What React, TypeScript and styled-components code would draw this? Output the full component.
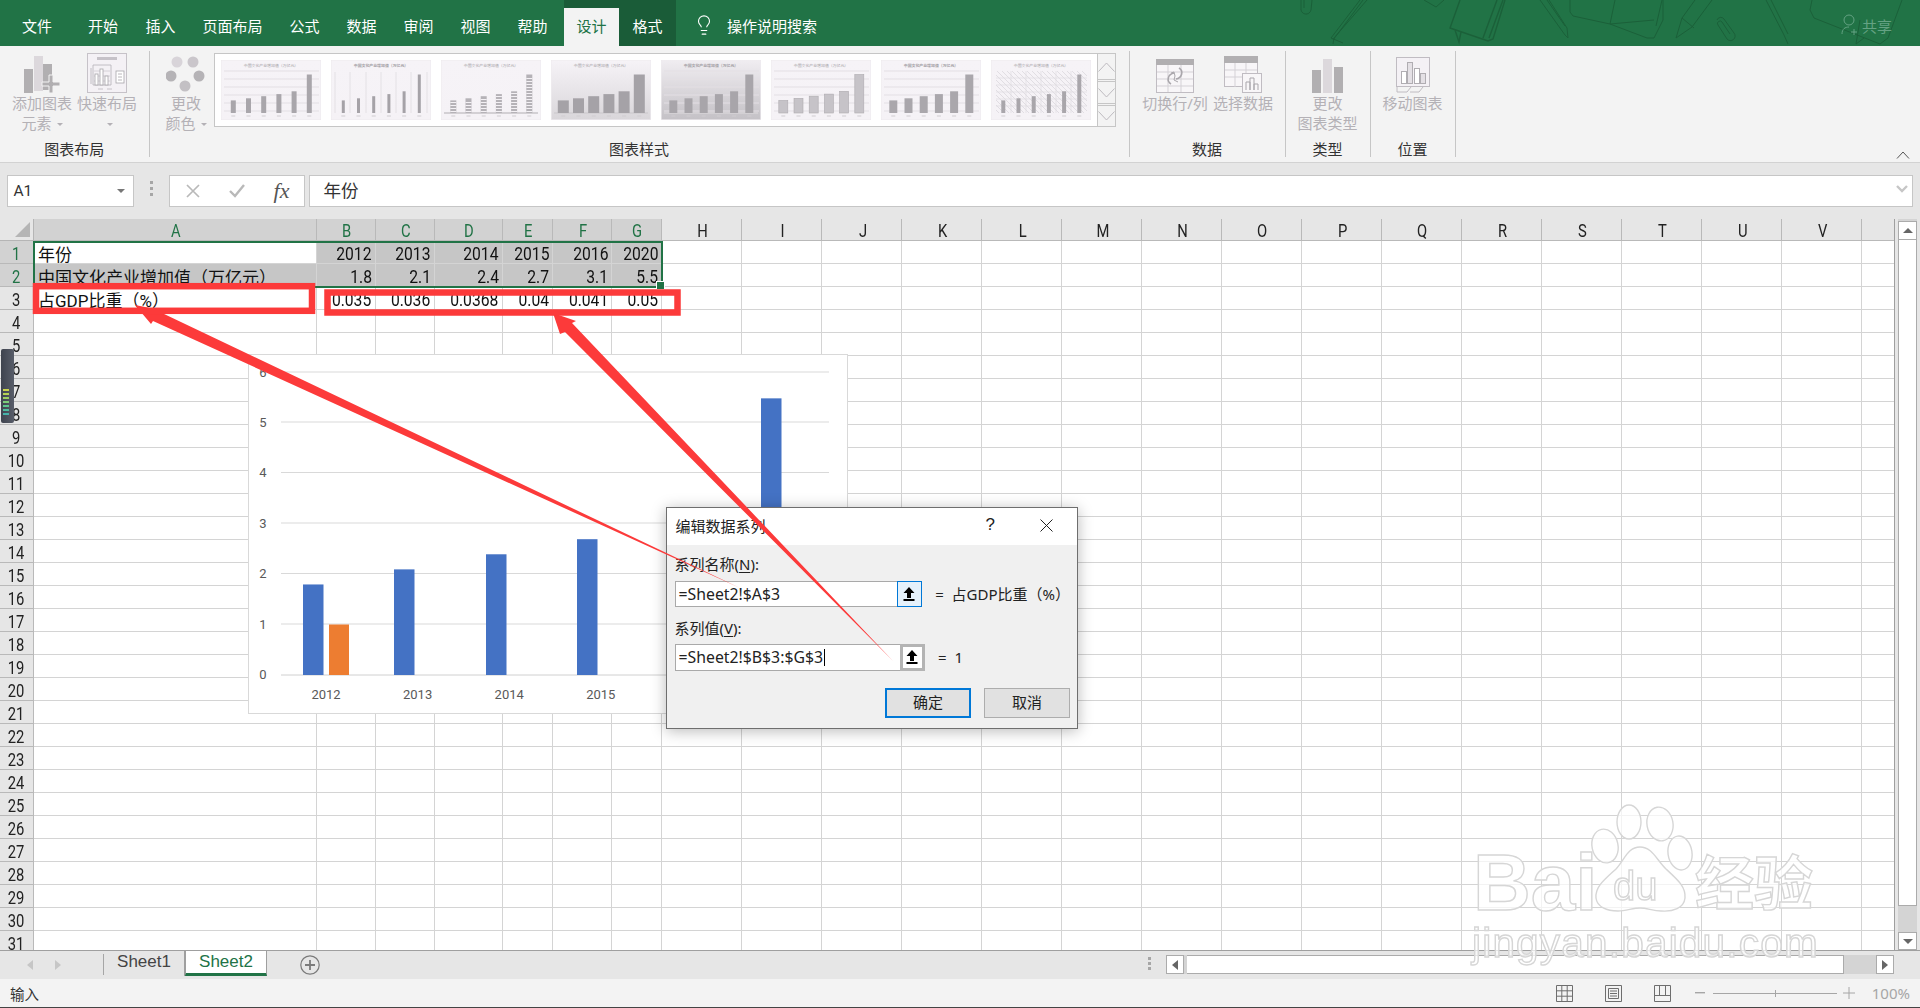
import styled, { createGlobalStyle } from 'styled-components';
import { Lightbulb } from 'lucide-react';

const UI_FONT = '"Noto Sans", "Noto Sans CJK SC", sans-serif';
const GREEN = '#217346';
const DISABLED = '#b4b1b6';

const GlobalStyle = createGlobalStyle`
  html, body {
    margin: 0;
    padding: 0;
    background: #e6e6e6;
  }
  * {
    box-sizing: border-box;
  }
`;

const COLUMNS = ['A', 'B', 'C', 'D', 'E', 'F', 'G', 'H', 'I', 'J', 'K', 'L', 'M', 'N', 'O', 'P', 'Q', 'R', 'S', 'T', 'U', 'V', ''];
const ROWS: string[][] = [
  ['年份', '2012', '2013', '2014', '2015', '2016', '2020'],
  ['中国文化产业增加值（万亿元）', '1.8', '2.1', '2.4', '2.7', '3.1', '5.5'],
  ['占GDP比重（%）', '0.035', '0.036', '0.0368', '0.04', '0.041', '0.05'],
];
const VALUES = [1.8, 2.1, 2.4, 2.7, 3.1, 5.5];

const Page = styled.div`
  position: relative;
  display: flex;
  flex-direction: column;
  width: 1920px;
  height: 1008px;
  overflow: hidden;
  font-family: ${UI_FONT};
  color: #333;
`;

/* title bar */
const TitleBar = styled.div`
  position: relative;
  display: flex;
  flex: none;
  height: 46px;
  background: ${GREEN};
  color: #fff;
  font-size: 15px;
`;

const Pattern = styled.svg`
  position: absolute;
  inset: 0;
  pointer-events: none;
`;

const Tab = styled.div<{ $width: number; $active?: boolean }>`
  position: relative;
  display: flex;
  align-items: center;
  justify-content: center;
  width: ${(p) => p.$width}px;
  height: ${(p) => (p.$active ? '38px' : '100%')};
  padding: ${(p) => (p.$active ? '0 0 3px' : '4px 0 0')};
  background: ${(p) => (p.$active ? '#f3f3f3' : 'transparent')};
  color: ${(p) => (p.$active ? GREEN : '#fff')};
`;

const ContextTabs = styled.div`
  display: flex;
  align-items: flex-end;
  height: 100%;
  margin-left: 3px;
  background: #1a5c38;
`;

const Search = styled.div`
  position: relative;
  display: flex;
  align-items: center;
  gap: 12px;
  margin-left: 17px;
  padding-top: 4px;
`;

const Share = styled.div`
  position: relative;
  display: flex;
  align-items: center;
  gap: 5px;
  margin-left: auto;
  padding: 4px 28px 0 0;
  color: #64a283;
`;

/* ribbon */
const Ribbon = styled.div`
  display: flex;
  flex: none;
  height: 117px;
  padding-top: 5px;
  background: #f3f3f3;
  border-bottom: 1px solid #d2d2d2;
`;

const Group = styled.div<{ $width: number }>`
  display: flex;
  flex-direction: column;
  width: ${(p) => p.$width}px;
  height: 106px;
  border-right: 1px solid #c6c6c6;
`;

const GroupBody = styled.div<{ $pad?: number }>`
  display: flex;
  flex: 1;
  justify-content: ${(p) => (p.$pad === undefined ? 'center' : 'flex-start')};
  padding-left: ${(p) => p.$pad ?? 0}px;
`;

const GroupTitle = styled.div`
  height: 18px;
  margin-bottom: -1px;
  font-size: 15px;
  line-height: 18px;
  text-align: center;
  color: #333;
`;

const RibbonButton = styled.div<{ $width: number }>`
  display: flex;
  flex-direction: column;
  align-items: center;
  width: ${(p) => p.$width}px;
  color: ${DISABLED};
  font-size: 15px;
  line-height: 19.5px;
  white-space: nowrap;
`;

const IconSlot = styled.div`
  display: flex;
  align-items: flex-end;
  justify-content: center;
  height: 43px;
  padding-bottom: 1px;
`;

const Caret = styled.span`
  display: inline-block;
  width: 0;
  height: 0;
  margin-left: 5px;
  vertical-align: 3px;
  border-top: 3px solid ${DISABLED};
  border-left: 3px solid transparent;
  border-right: 3px solid transparent;
`;

const Gallery = styled.div`
  display: flex;
  width: 902px;
  height: 74px;
  margin-top: 2px;
  padding: 6px 0 0 6px;
  background: #fff;
  border: 1px solid #c6c6c6;
`;

const Thumbs = styled.div`
  display: flex;
  gap: 10px;
  height: 60px;
`;

const GalleryScroll = styled.div`
  display: flex;
  flex-direction: column;
  width: 21px;
  height: 74px;
  margin: -7px -1px 0 6px;
  border: 1px solid #c6c6c6;
  background: #f3f3f3;
`;

const GalleryStep = styled.div<{ $height: number; $more?: boolean }>`
  display: flex;
  align-items: center;
  justify-content: center;
  height: ${(p) => p.$height}px;
  border-top: ${(p) => (p.$more ? '3px double #c6c6c6' : 'none')};
  & + & {
    border-top: ${(p) => (p.$more ? '3px double #c6c6c6' : '1px solid #c6c6c6')};
  }
`;

const Collapse = styled.div`
  align-self: flex-end;
  margin: 0 10px 3px auto;
  line-height: 0;
`;

/* formula bar */
const FormulaBar = styled.div`
  display: flex;
  flex: none;
  align-items: flex-start;
  height: 56px;
  padding: 12px 7px 0 6.5px;
  background: #e6e6e6;
`;

const FormulaBox = styled.div`
  display: flex;
  align-items: center;
  height: 32px;
  background: #fff;
  border: 1px solid #c6c6c6;
`;

const NameBox = styled(FormulaBox)`
  justify-content: space-between;
  width: 127px;
  padding: 0 8px 0 6px;
  font-family: Roboto, sans-serif;
  font-size: 15.5px;
`;

const NameCaret = styled.span`
  width: 0;
  height: 0;
  border-top: 4px solid #777;
  border-left: 4px solid transparent;
  border-right: 4px solid transparent;
`;

const Dots = styled.div`
  display: flex;
  flex-direction: column;
  gap: 3px;
  margin: 6px 16px 0 16px;
`;

const Dot = styled.span`
  width: 3px;
  height: 3px;
  background: #a6a6a6;
`;

const ActionBox = styled(FormulaBox)`
  justify-content: space-between;
  width: 136px;
  padding: 0 14px 0 16px;
`;

const FormulaInput = styled(FormulaBox)`
  flex: 1;
  justify-content: space-between;
  margin-left: 4px;
  padding: 0 3px 3px 14px;
  font-size: 17.5px;
`;

const FxText = styled.span`
  font-family: "Liberation Serif", serif;
  font-style: italic;
  font-size: 22px;
  line-height: 22px;
  color: #555;
`;

/* sheet */
const SheetRow = styled.div`
  position: relative;
  display: flex;
  flex: none;
  height: 731px;
  background: #e6e6e6;
`;

const SheetGrid = styled.div`
  display: grid;
  grid-template-columns: 33.5px 283px 59px 59px 68px 50.5px 59px 50px repeat(15, 80px) 33px;
  grid-auto-rows: 23px;
  grid-template-rows: 22px;
  width: 1895px;
  height: 731px;
  overflow: hidden;
  background: #fff;
  border-right: 1px solid #9f9f9f;
`;

const Corner = styled.div`
  position: relative;
  background: #e6e6e6;
  border-right: 1px solid #b5b5b5;
  border-bottom: 1px solid #b5b5b5;
  &::after {
    content: '';
    position: absolute;
    right: 3px;
    bottom: 3px;
    border-left: 15px solid transparent;
    border-bottom: 15px solid #b5b5b5;
  }
`;

const Heading = styled.div<{ $selected: boolean; $row?: boolean }>`
  display: flex;
  align-items: center;
  justify-content: center;
  overflow: hidden;
  background: ${(p) => (p.$selected ? '#d2d2d2' : '#e6e6e6')};
  color: ${(p) => (p.$selected ? GREEN : '#222')};
  border-right: 1px solid #b9b9b9;
  border-bottom: 1px solid #b9b9b9;
  font-family: Roboto, sans-serif;
  font-size: 18px;
  padding: ${(p) => (p.$row ? '2px 0 0' : '2px 0 0 2px')};
`;

const Narrow = styled.span`
  display: inline-block;
  transform: scaleX(0.82);
`;

const Cell = styled.div<{ $shaded: boolean; $number: boolean }>`
  display: flex;
  align-items: center;
  justify-content: ${(p) => (p.$number ? 'flex-end' : 'flex-start')};
  padding: 3px 3px 0 4.5px;
  overflow: hidden;
  white-space: nowrap;
  background: ${(p) => (p.$shaded ? '#c6c6c6' : '#fff')};
  border-right: 1px solid #d4d4d4;
  border-bottom: 1px solid #d4d4d4;
  color: #111;
  font-family: Roboto, "Noto Sans CJK SC", sans-serif;
  font-size: ${(p) => (p.$number ? 18 : 17)}px;
`;

const CellNumber = styled.span`
  display: inline-block;
  transform: scaleX(0.87);
  transform-origin: right center;
`;

const SelectionFrame = styled.div`
  position: absolute;
  left: 33px;
  top: 22px;
  width: 629.5px;
  height: 47px;
  border: 2px solid ${GREEN};
  pointer-events: none;
  &::after {
    content: '';
    position: absolute;
    right: -4px;
    bottom: -4px;
    width: 7px;
    height: 7px;
    background: ${GREEN};
    border: 1px solid #fff;
  }
`;

const ChartCard = styled.div`
  position: absolute;
  left: 248px;
  top: 135px;
  width: 600px;
  height: 360px;
  background: #fff;
  border: 1px solid #d9d9d9;
  line-height: 0;
`;

const VScroll = styled.div`
  display: flex;
  flex-direction: column;
  width: 19px;
  height: 731px;
  margin-left: 3px;
  padding-top: 2px;
  background: #d4d4d4;
`;

const ScrollButton = styled.div<{ $w?: number; $h?: number }>`
  display: flex;
  flex: none;
  align-items: center;
  justify-content: center;
  width: ${(p) => (p.$w ? `${p.$w}px` : '100%')};
  height: ${(p) => (p.$h ? `${p.$h}px` : '100%')};
  background: #fff;
  border: 1px solid #ababab;
`;

const VThumb = styled.div`
  flex: none;
  height: 666px;
  background: #fff;
  border: 1px solid #ababab;
  border-width: 0 1px 1px;
`;

const Track = styled.div`
  flex: 1;
  background: #d4d4d4;
`;

const Tri = styled.span<{ $dir: 'up' | 'down' | 'left' | 'right'; $color?: string }>`
  width: 0;
  height: 0;
  border-style: solid;
  border-color: transparent;
  border-width: ${(p) => (p.$dir === 'up' || p.$dir === 'down' ? '5px' : '5px 6px')};
  ${(p) => `border-${{ up: 'bottom', down: 'top', left: 'right', right: 'left' }[p.$dir]}-color: ${p.$color ?? '#666'};`}
  ${(p) => `border-${p.$dir === 'up' ? 'top' : p.$dir === 'down' ? 'bottom' : p.$dir}-width: 0;`}
`;

/* sheet tabs */
const TabsBar = styled.div`
  display: flex;
  flex: none;
  align-items: flex-start;
  height: 29px;
  background: #e6e6e6;
  border-top: 1px solid #9f9f9f;
`;

const SheetNav = styled.div`
  display: flex;
  align-items: center;
  gap: 22px;
  width: 104px;
  height: 21px;
  margin-top: 3px;
  padding-left: 27px;
  border-right: 1px solid #a6a6a6;
`;

const SheetTab = styled.div<{ $active?: boolean }>`
  display: flex;
  align-items: center;
  justify-content: center;
  width: ${(p) => (p.$active ? 82 : 81)}px;
  height: 25px;
  padding-bottom: ${(p) => (p.$active ? '0' : '3px')};
  font-family: "Liberation Sans", sans-serif;
  font-size: 17px;
  background: ${(p) => (p.$active ? '#fff' : 'transparent')};
  color: ${(p) => (p.$active ? GREEN : '#444')};
  border-right: 1px solid #9f9f9f;
  border-left: ${(p) => (p.$active ? '1px solid #9f9f9f' : 'none')};
  border-bottom: ${(p) => (p.$active ? `3px solid ${GREEN}` : 'none')};
`;

const AddSheet = styled.div`
  margin: 4px 0 0 33px;
  line-height: 0;
`;

const HandleDots = styled(Dots)`
  margin: 6px 0 0 auto;
  gap: 2px;
`;

const HScroll = styled.div`
  display: flex;
  width: 728px;
  height: 19px;
  margin: 4px 26px 0 15px;
  background: #d4d4d4;
`;

const HThumb = styled.div`
  width: 657px;
  margin-left: 3px;
  background: #fff;
  border: 1px solid #ababab;
  border-width: 1px 1px 1px 0;
`;

/* status bar */
const StatusBar = styled.div`
  display: flex;
  flex: none;
  align-items: center;
  height: 29px;
  padding: 0 10px;
  background: #f3f3f3;
  border-bottom: 1px solid #444;
  font-size: 14.5px;
`;

const ViewIcons = styled.div`
  display: flex;
  gap: 32px;
  margin-left: auto;
  line-height: 0;
`;

const ZoomGroup = styled.div`
  display: flex;
  align-items: center;
  margin-left: 24px;
  color: #a6a6a6;
`;

const ZoomLine = styled.div`
  position: relative;
  width: 124px;
  height: 1px;
  margin: 0 6px 0 8px;
  background: #a6a6a6;
  &::after {
    content: '';
    position: absolute;
    left: 62px;
    top: -3px;
    width: 1px;
    height: 7px;
    background: #a6a6a6;
  }
`;

const ZoomLabel = styled.span`
  margin-left: 17px;
  font-size: 15px;
`;

/* dialog */
const Dialog = styled.div`
  position: absolute;
  left: 665.5px;
  top: 507px;
  width: 412.5px;
  height: 221.500px;
  background: #f0f0f0;
  border: 1px solid #6e6e6e;
  box-shadow: 0 2px 14px rgba(0, 0, 0, 0.28);
  font-size: 15px;
  color: #222;
`;

const DialogHead = styled.div`
  display: flex;
  align-items: center;
  height: 37px;
  padding: 0 24px 3px 9px;
  background: #fff;
`;

const HeadHelp = styled.span`
  margin-left: auto;
  margin-right: 45px;
  font-family: "Liberation Sans", sans-serif;
  font-size: 17px;
`;

const DialogBody = styled.div`
  padding: 8px 7px 0 8px;
`;

const FieldLabel = styled.div<{ $gap?: boolean }>`
  height: 22px;
  margin-top: ${(p) => (p.$gap ? '9.5px' : '0')};
  margin-bottom: 5.5px;
  font-size: 15px;
  line-height: 22px;
  u {
    text-underline-offset: 2px;
  }
`;

const FieldRow = styled.div`
  display: flex;
  align-items: center;
`;

const FieldInput = styled.div`
  display: flex;
  align-items: center;
  width: 250px;
  height: 26.5px;
  background: #fff;
  border: 1px solid #a9a9a9;
`;

const FieldValue = styled.div`
  flex: 1;
  padding-left: 3px;
  font-size: 15.8px;
  white-space: nowrap;
`;

const Caretline = styled.span`
  display: inline-block;
  width: 1px;
  height: 17px;
  margin-left: 1px;
  vertical-align: -3px;
  background: #000;
`;

const RefButton = styled.div<{ $focus?: boolean }>`
  display: flex;
  flex: none;
  align-items: center;
  justify-content: center;
  width: 25px;
  height: calc(100% + 2px);
  margin-right: -1px;
  background: ${(p) => (p.$focus ? '#e5f1fb' : '#fff')};
  border: ${(p) => (p.$focus ? '1px solid #0078d7' : '3px solid #b4b4b4')};
`;

const FieldResult = styled.div`
  margin-left: 13.5px;
  padding-bottom: 1px;
  font-size: 15px;
  white-space: nowrap;
`;

const DialogActions = styled.div`
  display: flex;
  justify-content: flex-end;
  gap: 13px;
  margin-top: 17px;
`;

const DialogButton = styled.div<{ $primary?: boolean }>`
  display: flex;
  align-items: center;
  justify-content: center;
  width: 86px;
  height: 30px;
  padding-bottom: 3px;
  background: #e1e1e1;
  border: ${(p) => (p.$primary ? '2px solid #0078d7' : '1px solid #adadad')};
  font-size: 15px;
`;

const Overlay = styled.svg`
  position: absolute;
  left: 0;
  top: 0;
  pointer-events: none;
`;

const Gadget = styled.div`
  position: absolute;
  left: 1px;
  top: 349px;
  display: flex;
  flex-direction: column;
  justify-content: flex-end;
  gap: 2px;
  width: 13px;
  height: 74px;
  padding: 0 5px 8px 2px;
  background: linear-gradient(90deg, #3e434e, #585d69);
  border-radius: 2px;
`;

const GadgetBar = styled.span`
  height: 2px;
`;

function TitlePattern() {
  const line = { fill: 'none', stroke: '#1b6039', strokeWidth: 1 };
  return (
    <Pattern width={1920} height={46} viewBox="0 0 1920 46">
      <g {...line}>
        <path d="M1301 0v8a5 5 0 0 0 10 2l1-10M1304 0v8" />
        <path d="M1367 0l-33 38-1 6M1360 0l-29 38M1363 0l-30 40M1331 38l12 5" />
        <path d="M1424 0l12 7 8-7" />
        <path d="M1460 0l-10 28 38 13 5-2 12-39M1497 0l-14 38M1503 0l-14 38M1455 30l4 12 2-10" strokeWidth={1.4} />
        <path d="M1540 0l25 35 3 3-1-10-18-28M1547 0l18 26" />
        <path d="M1570 0v12l3 4 37 8 37 14h7l9-18 0-20M1615 0l-5 24 44-4M1662 0l-6 26" />
        <path d="M1695 0l-13 18-6 20 16-11 20-27M1682 18l12 10" />
        <path d="M1717 20a4 4 0 0 1 7-1l10 14a4 4 0 0 1-7 6l-9-14a2 2 0 0 1 4-3l8 12" />
        <path d="M1766 0l18 35 4 9M1771 0l17 34M1812 0l-2 10 4 8 66 26 8-6 14-38M1860 20l-4 24 8-6" />
      </g>
    </Pattern>
  );
}

function ShareIcon() {
  return (
    <svg width={16} height={24} viewBox="0 0 16 24" fill="none" stroke="#64a283" strokeWidth={1}>
      <circle cx="8" cy="7" r="5" />
      <path d="M1 21c0-5 3-7 7-7M10 19h6M13 16v6" />
    </svg>
  );
}

function AddChartIcon() {
  return (
    <svg width={36} height={37} viewBox="0 0 36 37">
      <rect x="0" y="13" width="9" height="27" fill="#b1afb1" />
      <rect x="10" y="0" width="9" height="35" fill="#dcd8dc" />
      <rect x="19" y="8" width="9" height="26" fill="#b1afb1" />
      <path d="M18 26h7v-7h4v7h7v4h-7v7h-4v-7h-7z" fill="#b1afb1" stroke="#f3f3f3" strokeWidth="1" />
    </svg>
  );
}

function QuickLayoutIcon() {
  return (
    <svg width={40} height={40} viewBox="0 0 40 40" fill="none">
      <rect x="0.5" y="0.5" width="39" height="39" fill="#f4f1f5" stroke="#c6c2c8" />
      <rect x="10" y="4" width="20" height="3" fill="#c6c2c8" />
      <path d="M4 15v16M4 12v0M6 12h18v20H6z" stroke="#b5b2b7" strokeWidth=".8" />
      <path d="M7 18h16M7 23h16M7 28h16" stroke="#cfccd1" strokeWidth=".8" />
      <rect x="8" y="21" width="3" height="11" fill="#fff" stroke="#a8a5aa" strokeWidth=".8" />
      <rect x="13" y="16" width="3" height="16" fill="#fff" stroke="#a8a5aa" strokeWidth=".8" />
      <rect x="18" y="23" width="3" height="9" fill="#fff" stroke="#a8a5aa" strokeWidth=".8" />
      <rect x="29" y="18" width="8" height="12" fill="#fff" stroke="#a8a5aa" strokeWidth=".8" />
      <path d="M31 21h4M31 24h4M31 27h4" stroke="#a8a5aa" strokeWidth=".8" />
      <path d="M11 36h5M20 36h5" stroke="#c6c2c8" />
    </svg>
  );
}

function ChangeColorIcon() {
  return (
    <svg width={40} height={38} viewBox="0 0 40 38">
      <circle cx="11" cy="7" r="5.5" fill="#d8d4d9" />
      <circle cx="27" cy="7" r="5.5" fill="#cac6cb" />
      <circle cx="5" cy="21" r="5.5" fill="#b5b3b6" />
      <circle cx="33" cy="21" r="5.5" fill="#b5b3b6" />
      <circle cx="19" cy="31" r="5.5" fill="#c3c0c4" />
    </svg>
  );
}

function SwitchIcon() {
  return (
    <svg width={38} height={34} viewBox="0 0 38 34" fill="none">
      <rect x="0.5" y="0.5" width="37" height="33" fill="#f8f6f8" stroke="#c0bcc2" />
      <rect x="0" y="0" width="38" height="6" fill="#b1afb1" />
      <path d="M1 13h36M1 20h36M1 27h36M12 6v27M25 6v27" stroke="#d4d1d6" />
      <path d="M23 9c5 3 3 10-3 11M15 25c-5-3-3-10 3-11" stroke="#a9a6ab" strokeWidth="1.5" />
      <path d="M19 17l-1 4 4 2M19 17l-1-4-3 1" stroke="#a9a6ab" strokeWidth="1" />
    </svg>
  );
}

function SelectDataIcon() {
  return (
    <svg width={38} height={37} viewBox="0 0 38 37" fill="none">
      <rect x="0.5" y="0.5" width="33" height="30" fill="#f8f6f8" stroke="#c0bcc2" />
      <rect x="0" y="0" width="34" height="7" fill="#b1afb1" />
      <path d="M1 14h32M1 21h32M11 7v24M22 7v24" stroke="#d4d1d6" />
      <rect x="18.5" y="17.5" width="19" height="19" fill="#f8f6f8" stroke="#c0bcc2" />
      <path d="M22 34v-8h4v8M26 34v-12h4v12M30 34v-6h4v6" stroke="#a9a6ab" />
    </svg>
  );
}

function ChangeTypeIcon() {
  return (
    <svg width={32} height={34} viewBox="0 0 32 34">
      <rect x="0" y="11" width="9" height="23" fill="#b1afb1" />
      <rect x="11" y="0" width="9" height="34" fill="#dcd8dc" />
      <rect x="22" y="8" width="9" height="26" fill="#b1afb1" />
    </svg>
  );
}

function MoveChartIcon() {
  return (
    <svg width={34} height={36} viewBox="0 0 34 36" fill="none">
      <rect x="0.5" y="0.5" width="33" height="29" fill="#f4f1f5" stroke="#c0bcc2" />
      <rect x="5.5" y="14.5" width="5" height="12" fill="#fff" stroke="#b0adb2" />
      <rect x="11.5" y="5.5" width="5" height="21" fill="#e4e0e5" stroke="#b0adb2" />
      <rect x="18.5" y="11.5" width="5" height="15" fill="#fff" stroke="#b0adb2" />
      <rect x="24.5" y="16.5" width="5" height="10" fill="#e4e0e5" stroke="#b0adb2" />
      <path d="M1 30v5h10l4-5M14 35h9l4-5" stroke="#c0bcc2" />
    </svg>
  );
}

type ThumbSpec = {
  bar: number;
  fill: string;
  stroke?: string;
  grid: 'lines' | 'columns' | 'hatch' | 'none';
  tone: 'plain' | 'fade' | 'dark';
  stripes?: boolean;
  strong?: boolean;
  floor?: boolean;
};

const THUMBS: ThumbSpec[] = [
  { bar: 5, fill: '#a9a6ab', grid: 'lines', tone: 'plain' },
  { bar: 3, fill: '#a5a2a7', grid: 'columns', tone: 'plain', strong: true },
  { bar: 6, fill: '#b5b2b7', grid: 'none', tone: 'plain', stripes: true, floor: true },
  { bar: 11, fill: '#a5a2a7', grid: 'none', tone: 'fade', floor: true },
  { bar: 8, fill: '#a8a5aa', grid: 'lines', tone: 'dark', strong: true, floor: true },
  { bar: 9, fill: '#c6c3c8', stroke: '#aeabb0', grid: 'lines', tone: 'plain' },
  { bar: 8, fill: '#aaa7ac', grid: 'lines', tone: 'plain', strong: true },
  { bar: 4, fill: '#a9a6ab', grid: 'hatch', tone: 'plain' },
];

function ChartThumb({ spec, id }: { spec: ThumbSpec; id: number }) {
  return (
    <svg width={100} height={60} viewBox="0 0 100 60">
      <defs>
        <linearGradient id={`tone-${id}`} x1="0" y1="0" x2="0" y2="1">
          <stop offset="0" stopColor={spec.tone === 'dark' ? '#f0edf1' : '#f6f3f7'} />
          <stop offset="1" stopColor={spec.tone === 'dark' ? '#c4c1c6' : spec.tone === 'fade' ? '#d9d6da' : '#f5f2f6'} />
        </linearGradient>
        <pattern id={`hatch-${id}`} width="5" height="5" patternUnits="userSpaceOnUse">
          <path d="M0 0l5 5" stroke="#dcd8de" strokeWidth=".8" />
        </pattern>
      </defs>
      <rect x="0.25" y="0.25" width="99.5" height="59.5" fill={`url(#tone-${id})`} stroke="#ebe7ec" strokeWidth=".5" />
      <text x="50" y="7" textAnchor="middle" fontSize="3.9" fontFamily={UI_FONT} fontWeight={spec.strong ? 700 : 400} fill="#a3a0a5">
        中国文化产业增加值（万亿元）
      </text>
      {spec.grid === 'lines' && [11, 19, 27, 35, 43, 51].map((y) => (
        <path key={y} d={`M3 ${y}h95`} stroke="#e3dfe4" strokeWidth="1" />
      ))}
      {spec.grid === 'columns' && [4, 19, 35, 50, 65, 80, 96].map((x) => (
        <path key={x} d={`M${x} 12v41`} stroke="#e0dce1" strokeWidth=".8" />
      ))}
      {spec.grid === 'hatch' && (
        <g>
          <rect x="5" y="11" width="91" height="42" fill={`url(#hatch-${id})`} />
          <path d="M5 18h91M5 25h91M5 32h91M5 39h91M5 46h91M20 11v42M35 11v42M50 11v42M65 11v42M80 11v42" stroke="#e0dce1" strokeWidth=".7" />
        </g>
      )}
      {spec.floor && <rect x="3" y="52" width="94" height="2" fill="#d3d0d4" />}
      {VALUES.map((value, i) => {
        const cx = 12.3 + 15.2 * i;
        const height = value * 7;
        return (
          <g key={i}>
            <rect x={cx - spec.bar / 2} y={53 - height} width={spec.bar} height={height} fill={spec.fill} stroke={spec.stroke} strokeWidth=".6" />
            {spec.stripes && Array.from({ length: Math.floor(height / 3) }, (_, j) => (
              <rect key={j} x={cx - spec.bar / 2} y={51 - j * 3} width={spec.bar} height="1" fill="#f4f1f5" />
            ))}
            <rect x={cx - 2} y="55.5" width="4" height="1" fill="#cfccd0" />
          </g>
        );
      })}
    </svg>
  );
}

function Chevron({ up }: { up?: boolean }) {
  return (
    <svg width={17} height={10} viewBox="0 0 17 10" fill="none" stroke="#bdbabf">
      <path d={up ? 'M0.5 9.5L8.5 1l8 8.5' : 'M0.5 0.5L8.5 9l8-8.5'} />
    </svg>
  );
}

function ChartDrawing() {
  const gridY = [372, 422, 472.5, 523, 573.5, 624];
  const labels = ['2012', '2013', '2014', '2015', '2016', '2020'];
  const bars = [303, 394, 486, 577, 669, 761];
  const fontProps = { fontFamily: 'Roboto, sans-serif', fontSize: 13, fill: '#595959' };
  return (
    <svg width={598} height={358} viewBox="249 355 598 358">
      {gridY.map((y) => (
        <path key={y} d={`M281 ${y}H829`} stroke="#d9d9d9" />
      ))}
      <path d="M281 675H829" stroke="#d0d0d0" />
      {[0, 1, 2, 3, 4, 5, 6].map((n) => (
        <text key={n} x="263" y={679 - n * 50.4} textAnchor="middle" {...fontProps}>{n}</text>
      ))}
      {VALUES.map((value, i) => (
        <rect key={i} x={bars[i]} y={675 - value * 50.3} width="20.5" height={value * 50.3} fill="#4472c4" />
      ))}
      <rect x="329" y="624.5" width="20" height="50.5" fill="#ed7d31" />
      {labels.map((label, i) => (
        <text key={label} x={326 + i * 91.6} y="699" textAnchor="middle" {...fontProps}>{label}</text>
      ))}
    </svg>
  );
}

function RefIcon() {
  return (
    <svg width={12} height={14} viewBox="0 0 12 14">
      <path d="M6 0l5.5 6H8v5H4V6H0.5z" fill="#000" />
      <rect x="0.5" y="12" width="11" height="2" fill="#000" />
    </svg>
  );
}

function Annotations() {
  return (
    <Overlay width={1920} height={1008} viewBox="0 0 1920 1008">
      <g fill="#fc3a3a">
        <polygon points="135,305 160,310 162,313 740,588 153,321 151,324" />
        <polygon points="553,313 576,321 572,323 893,661 565,332 560,334" />
      </g>
      <g fill="none" stroke="#fc3a3a" strokeWidth="6.5">
        <rect x="36" y="286.2" width="276" height="24.6" />
        <rect x="327.5" y="292.5" width="350" height="20" />
      </g>
    </Overlay>
  );
}

function Watermark() {
  const outline = { fill: '#fff', fillOpacity: 0.72, stroke: '#d6d6d6', strokeWidth: 1.4 };
  return (
    <Overlay width={1920} height={1008} viewBox="0 0 1920 1008">
      <g {...outline} style={{ filter: 'blur(0.6px)' }}>
        <text x="1473" y="910" fontFamily='"Liberation Sans", sans-serif' fontWeight={700} fontSize="80">Bai</text>
        <ellipse cx="1605" cy="846" rx="13" ry="17" transform="rotate(-12 1605 846)" />
        <ellipse cx="1629" cy="822" rx="12" ry="17" />
        <ellipse cx="1660" cy="824" rx="13" ry="17" transform="rotate(-10 1660 824)" />
        <ellipse cx="1680" cy="853" rx="12" ry="17" transform="rotate(-8 1680 853)" />
        <path d="M1640 847c12 0 16 12 26 22 12 11 20 18 19 29-1 10-12 14-24 13-8 0-14-3-21-3s-14 3-22 3c-11 0-21-4-22-13-1-11 8-18 20-29 9-10 12-22 24-22z" />
        <text x="1613" y="900" fontFamily='"Liberation Sans", sans-serif' fontSize="40" fill="#fff">du</text>
        <text x="1695" y="905" fontFamily='"Noto Sans CJK SC", sans-serif' fontWeight={700} fontSize="59">经验</text>
        <text x="1472" y="957" fontFamily='"Liberation Sans", sans-serif' fontSize="40.5" letterSpacing="1.2">jingyan.baidu.com</text>
      </g>
    </Overlay>
  );
}

export default function App() {
  const tabs: [string, number][] = [['文件', 74], ['开始', 58], ['插入', 57], ['页面布局', 87], ['公式', 57], ['数据', 57], ['审阅', 57], ['视图', 57], ['帮助', 57]];
  const ledColors = ['#c8d24c', '#b6d154', '#9bcf61', '#7ccb78', '#5fc48d', '#4fbb9e', '#46b2aa'];

  return (
    <>
      <GlobalStyle />
      <Page>
        <TitleBar>
          <TitlePattern />
          {tabs.map(([label, width]) => (
            <Tab key={label} $width={width}>{label}</Tab>
          ))}
          <ContextTabs>
            <Tab $width={55} $active>设计</Tab>
            <Tab $width={57}>格式</Tab>
          </ContextTabs>
          <Search>
            <Lightbulb size={22} strokeWidth={1.2} color="#fff" />
            <span>操作说明搜索</span>
          </Search>
          <Share>
            <ShareIcon />
            <span>共享</span>
          </Share>
        </TitleBar>

        <Ribbon>
          <Group $width={149.5}>
            <GroupBody $pad={9.5}>
              <RibbonButton $width={65}>
                <IconSlot><AddChartIcon /></IconSlot>
                添加图表
                <span>元素<Caret /></span>
              </RibbonButton>
              <RibbonButton $width={65}>
                <IconSlot><QuickLayoutIcon /></IconSlot>
                快速布局
                <span><Caret /></span>
              </RibbonButton>
            </GroupBody>
            <GroupTitle>图表布局</GroupTitle>
          </Group>
          <Group $width={980}>
            <GroupBody $pad={9}>
              <RibbonButton $width={55}>
                <IconSlot><ChangeColorIcon /></IconSlot>
                更改
                <span>颜色<Caret /></span>
              </RibbonButton>
              <Gallery>
                <Thumbs>
                  {THUMBS.map((spec, i) => (
                    <ChartThumb key={i} id={i} spec={spec} />
                  ))}
                </Thumbs>
                <GalleryScroll>
                  <GalleryStep $height={25}><Chevron up /></GalleryStep>
                  <GalleryStep $height={24}><Chevron /></GalleryStep>
                  <GalleryStep $height={23} $more><Chevron /></GalleryStep>
                </GalleryScroll>
              </Gallery>
            </GroupBody>
            <GroupTitle>图表样式</GroupTitle>
          </Group>
          <Group $width={156}>
            <GroupBody $pad={11.5}>
              <RibbonButton $width={68}>
                <IconSlot><SwitchIcon /></IconSlot>
                切换行/列
              </RibbonButton>
              <RibbonButton $width={68}>
                <IconSlot><SelectDataIcon /></IconSlot>
                选择数据
              </RibbonButton>
            </GroupBody>
            <GroupTitle>数据</GroupTitle>
          </Group>
          <Group $width={85}>
            <GroupBody>
              <RibbonButton $width={68}>
                <IconSlot><ChangeTypeIcon /></IconSlot>
                更改
                <span>图表类型</span>
              </RibbonButton>
            </GroupBody>
            <GroupTitle>类型</GroupTitle>
          </Group>
          <Group $width={85}>
            <GroupBody>
              <RibbonButton $width={68}>
                <IconSlot><MoveChartIcon /></IconSlot>
                移动图表
              </RibbonButton>
            </GroupBody>
            <GroupTitle>位置</GroupTitle>
          </Group>
          <Collapse>
            <svg width={14} height={8} viewBox="0 0 14 8" fill="none" stroke="#555">
              <path d="M1 7.5L7 1l6 6.5" />
            </svg>
          </Collapse>
        </Ribbon>

        <FormulaBar>
          <NameBox>
            <span>A1</span>
            <NameCaret />
          </NameBox>
          <Dots>
            <Dot />
            <Dot />
            <Dot />
          </Dots>
          <ActionBox>
            <svg width={14} height={14} viewBox="0 0 14 14" fill="none" stroke="#b9b9b9" strokeWidth="1.7">
              <path d="M1 1l12 12M13 1L1 13" />
            </svg>
            <svg width={16} height={14} viewBox="0 0 16 14" fill="none" stroke="#b9b9b9" strokeWidth="2.4">
              <path d="M1 7l5 5 9-11" />
            </svg>
            <FxText>fx</FxText>
          </ActionBox>
          <FormulaInput>
            <span>年份</span>
            <svg width={14} height={9} viewBox="0 0 14 9" fill="none" stroke="#c6c6c6" strokeWidth="2.4">
              <path d="M2 1l5 5 5-5" />
            </svg>
          </FormulaInput>
        </FormulaBar>

        <SheetRow>
          <SheetGrid>
            <Corner />
            {COLUMNS.map((name, i) => (
              <Heading key={`col-${i}`} $selected={i < 7}><Narrow>{name}</Narrow></Heading>
            ))}
            {Array.from({ length: 31 }, (_, r) => [
              <Heading key={`row-${r}`} $selected={r < 2} $row><Narrow>{r + 1}</Narrow></Heading>,
              ...COLUMNS.map((_, c) => {
                const text = ROWS[r]?.[c];
                return (
                  <Cell
                    key={`${r}-${c}`}
                    $shaded={r < 2 && c < 7 && !(r === 0 && c === 0)}
                    $number={c > 0 && c < 7}
                  >
                    {c > 0 && text ? <CellNumber>{text}</CellNumber> : text}
                  </Cell>
                );
              }),
            ])}
          </SheetGrid>
          <SelectionFrame />
          <ChartCard>
            <ChartDrawing />
          </ChartCard>
          <VScroll>
            <ScrollButton $h={19}><Tri $dir="up" /></ScrollButton>
            <VThumb />
            <Track />
            <ScrollButton $h={18}><Tri $dir="down" /></ScrollButton>
          </VScroll>
        </SheetRow>

        <TabsBar>
          <SheetNav>
            <Tri $dir="left" $color="#c6c6c6" />
            <Tri $dir="right" $color="#c6c6c6" />
          </SheetNav>
          <SheetTab>Sheet1</SheetTab>
          <SheetTab $active>Sheet2</SheetTab>
          <AddSheet>
            <svg width={20} height={20} viewBox="0 0 20 20" fill="none" stroke="#7a7a7a">
              <circle cx="10" cy="10" r="9.2" strokeWidth="1.2" />
              <path d="M10 5v10M5 10h10" strokeWidth="1.8" />
            </svg>
          </AddSheet>
          <HandleDots>
            <Dot />
            <Dot />
            <Dot />
          </HandleDots>
          <HScroll>
            <ScrollButton $w={18}><Tri $dir="left" /></ScrollButton>
            <HThumb />
            <Track />
            <ScrollButton $w={18}><Tri $dir="right" /></ScrollButton>
          </HScroll>
        </TabsBar>

        <StatusBar>
          <span>输入</span>
          <ViewIcons>
            <svg width={17} height={17} viewBox="0 0 17 17" fill="none" stroke="#6e6e6e">
              <path d="M.5.5h16v16H.5zM.5 5.8h16M.5 11.2h16M5.8.5v16M11.2.5v16" />
            </svg>
            <svg width={17} height={17} viewBox="0 0 17 17" fill="none" stroke="#6e6e6e">
              <path d="M.5.5h16v16H.5zM3.5 3.5h10v10h-10zM5 6h7M5 8.500h7M5 11h7" />
            </svg>
            <svg width={17} height={17} viewBox="0 0 17 17" fill="none" stroke="#6e6e6e">
              <path d="M.5.5h16v16H.5zM.5 10.500h16M5.500.5v10M11.500.5v10" />
            </svg>
          </ViewIcons>
          <ZoomGroup>
            <svg width={10} height={2} viewBox="0 0 10 2"><rect width="10" height="1.4" fill="#a6a6a6" /></svg>
            <ZoomLine />
            <svg width={12} height={12} viewBox="0 0 12 12" stroke="#a6a6a6"><path d="M0 6h12M6 0v12" /></svg>
            <ZoomLabel>100%</ZoomLabel>
          </ZoomGroup>
        </StatusBar>

        <Dialog>
          <DialogHead>
            <span>编辑数据系列</span>
            <HeadHelp>?</HeadHelp>
            <svg width={13} height={13} viewBox="0 0 13 13" fill="none" stroke="#222">
              <path d="M.5.5l12 12M12.500.5l-12 12" />
            </svg>
          </DialogHead>
          <DialogBody>
            <FieldLabel>系列名称(<u>N</u>):</FieldLabel>
            <FieldRow>
              <FieldInput>
                <FieldValue>=Sheet2!$A$3</FieldValue>
                <RefButton $focus><RefIcon /></RefButton>
              </FieldInput>
              <FieldResult>=&nbsp; 占GDP比重（%）</FieldResult>
            </FieldRow>
            <FieldLabel $gap>系列值(<u>V</u>):</FieldLabel>
            <FieldRow>
              <FieldInput>
                <FieldValue>=Sheet2!$B$3:$G$3<Caretline /></FieldValue>
                <RefButton><RefIcon /></RefButton>
              </FieldInput>
              <FieldResult>=&nbsp; 1</FieldResult>
            </FieldRow>
            <DialogActions>
              <DialogButton $primary>确定</DialogButton>
              <DialogButton>取消</DialogButton>
            </DialogActions>
          </DialogBody>
        </Dialog>

        <Gadget>
          {ledColors.map((color) => (
            <GadgetBar key={color} style={{ background: color }} />
          ))}
        </Gadget>
        <Annotations />
        <Watermark />
      </Page>
    </>
  );
}
